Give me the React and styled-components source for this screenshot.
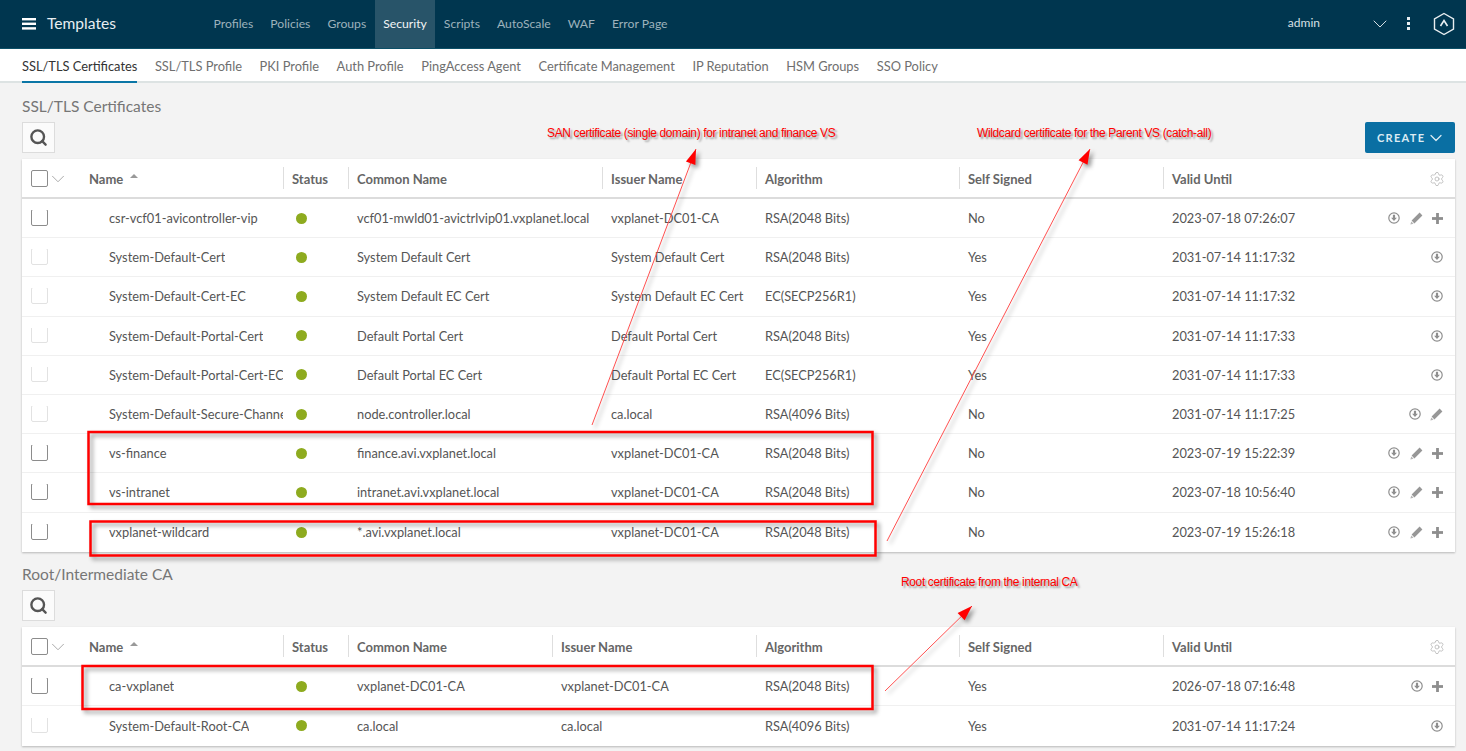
import React from 'react';
import styled, { createGlobalStyle } from 'styled-components';
import { Search, ChevronDown, Settings } from 'lucide-react';

const GlobalStyle = createGlobalStyle`
  html, body {
    margin: 0;
    background: #f3f3f3;
    font-family: 'Lato', 'Liberation Sans', sans-serif;
    overflow: hidden;
  }
  * { box-sizing: border-box; }
`;

const Page = styled.div`
  position: relative;
  width: 1466px;
  height: 751px;
  overflow: hidden;
  background: #f3f3f3;
`;

const TopBar = styled.header`
  display: flex;
  align-items: stretch;
  height: 49px;
  background: #00364f;
  border-bottom: 1px solid #0c5068;
  color: #fff;
`;

const Brand = styled.div`
  display: flex;
  align-items: center;
  gap: 11px;
  width: 205px;
  padding-left: 22px;
  font-size: 15.6px;
  color: #e8eef1;
`;

const BrandName = styled.span`
  margin-top: -3px;
`;

const MainNav = styled.nav`
  display: flex;
`;

const MainNavItem = styled.a`
  display: flex;
  align-items: center;
  padding: 0 8.5px 2px;
  font-size: 12.2px;
  color: ${p => (p.$active ? '#f2f5f6' : '#9db2bc')};
  background: ${p => (p.$active ? '#285469' : 'transparent')};
`;

const UserArea = styled.div`
  display: flex;
  align-items: center;
  margin-left: auto;
  padding-right: 11px;
  color: #d6e0e5;
  font-size: 12px;
`;

const UserName = styled.span`
  margin: 0 48px 3px 0;
`;

const DotsIcon = styled.span`
  display: flex;
  flex-direction: column;
  gap: 2px;
  margin: -2px 23.5px 0 14.5px;
  i {
    width: 3px;
    height: 3px;
    background: #e8eef1;
  }
`;

const SubNav = styled.nav`
  display: flex;
  gap: 17.6px;
  height: 34px;
  padding-left: 22px;
  background: #fff;
  border-bottom: 2px solid #dde3e3;
`;

const SubNavItem = styled.a`
  height: 34px;
  padding-top: 9px;
  font-size: 12.85px;
  white-space: nowrap;
  color: ${p => (p.$active ? '#333' : '#6f6f6f')};
  border-bottom: 2px solid ${p => (p.$active ? '#0a76a6' : 'transparent')};
`;

const Section = styled.section`
  padding: 0 11px 0 22px;
`;

const SectionTitle = styled.h2`
  margin: ${p => p.$top}px 0 0;
  height: 20px;
  font-size: 15.5px;
  line-height: 20px;
  font-weight: 400;
  color: #767676;
`;

const Toolbar = styled.div`
  display: flex;
  justify-content: space-between;
  align-items: flex-start;
  height: 31px;
  margin-top: 6px;
`;

const SearchButton = styled.button`
  display: flex;
  align-items: center;
  justify-content: center;
  width: 33px;
  height: 31px;
  padding: 0;
  background: #fbfbfb;
  border: 1px solid #dcdcdc;
  color: #555;
`;

const CreateButton = styled.button`
  display: flex;
  align-items: center;
  gap: 1px;
  width: 90px;
  height: 31px;
  padding: 0 0 0 12px;
  background: #0a6fa3;
  border: 0;
  border-radius: 2px;
  color: #dcebf3;
  font-family: inherit;
  font-size: 11px;
  font-weight: 700;
  letter-spacing: 1.3px;
`;

const Card = styled.div`
  margin-top: 6px;
  background: #fff;
  box-shadow: 0 1px 2px rgba(0, 0, 0, 0.25);
`;

const HeaderRow = styled.div`
  display: grid;
  grid-template-columns: ${p => p.$columns};
  align-items: center;
  height: 40px;
  border-bottom: 2px solid #dcdcdc;
`;

const HeaderCell = styled.div`
  display: flex;
  align-items: center;
  height: 22px;
  padding: 1px 0 0 8px;
  font-size: 13px;
  font-weight: 700;
  color: #666;
  border-left: 1px solid #dedede;
`;

const NameHeaderCell = styled(HeaderCell)`
  padding-left: 9px;
  border-left: 0;
`;

const SortCaret = styled.span`
  margin: -6px 0 0 7px;
  width: 0;
  height: 0;
  border-left: 4.5px solid transparent;
  border-right: 4.5px solid transparent;
  border-bottom: 4.5px solid #999;
`;

const GearCell = styled(HeaderCell)`
  justify-content: space-between;
  padding-right: 10px;
`;

const Row = styled.div`
  display: grid;
  grid-template-columns: ${p => p.$columns};
  align-items: center;
  height: 39.2px;
  border-bottom: 1px solid #f0f0f0;
  font-size: 12.8px;
  color: #555;
  &:last-child { border-bottom: 0; }
`;

const Cell = styled.div`
  padding-left: 9px;
  white-space: nowrap;
  overflow: hidden;
`;

const NameCell = styled(Cell)`
  display: flex;
  align-items: center;
`;

const NameText = styled.span`
  margin-left: 61px;
  overflow: hidden;
`;

const CheckBox = styled.span`
  flex: none;
  width: 17px;
  height: 17px;
  margin-top: -2px;
  background: #fff;
  border: 1.5px solid ${p => (p.$disabled ? '#e2e2e2' : '#8c8c8c')};
  border-radius: 2px;
`;

const HeaderCheck = styled(CheckBox)`
  margin-right: -1px;
  margin-top: 0;
`;

const HeaderLabel = styled.span`
  margin-left: 20px;
`;

const Dot = styled.span`
  display: block;
  width: 11px;
  height: 11px;
  margin-left: 4px;
  border-radius: 50%;
  background: #8eab1f;
`;

const ActionsCell = styled(Cell)`
  display: flex;
  align-items: center;
`;

const ValidText = styled.span`
  margin-right: auto;
`;

const Actions = styled.span`
  display: flex;
  align-items: center;
  gap: 9.5px;
  padding-right: 12px;
`;

const Annotation = styled.div`
  position: absolute;
  left: ${p => p.$x}px;
  top: ${p => p.$y}px;
  font-family: 'Liberation Sans', Arial, sans-serif;
  font-size: 12px;
  line-height: 14px;
  letter-spacing: -0.37px;
  color: #ff0000;
  white-space: nowrap;
  text-shadow: 2px 2px 2px rgba(0, 0, 0, 0.4);
`;

const Markup = styled.svg`
  position: absolute;
  top: 0;
  left: 0;
  pointer-events: none;
  filter: drop-shadow(3px 3px 2px rgba(0, 0, 0, 0.4));
`;

const MenuIcon = () => (
  <svg width="14" height="12" viewBox="0 0 14 12" fill="#fff">
    <rect y="0" width="14" height="2.4" />
    <rect y="4.6" width="14" height="2.4" />
    <rect y="9.2" width="14" height="2.4" />
  </svg>
);

const LogoIcon = () => (
  <svg width="22" height="24" viewBox="0 0 22 24" fill="none" stroke="#e8eef1" strokeWidth="1.4">
    <path d="M11 1.5 20.5 7v10L11 22.5 1.5 17V7z" />
    <path d="M7.5 14 11 8.5 14.5 14" strokeWidth="1.6" />
  </svg>
);

const DownloadIcon = () => (
  <svg width="12" height="12" viewBox="0 0 12 12">
    <circle cx="6" cy="6" r="5.2" fill="none" stroke="#8e8e8e" strokeWidth="1.2" />
    <path d="M4.9 2.8h2.2v3h1.8L6 9 3.1 5.8h1.8z" fill="#8e8e8e" />
  </svg>
);

const PencilIcon = () => (
  <svg width="13" height="13" viewBox="0 0 13 13">
    <path d="M9.6.6 12.4 3.4 4.4 11.4 1.6 8.6z" fill="#979797" />
    <path d="M1.2 9.4 3.6 11.8.4 12.6z" fill="#b5b5b5" />
  </svg>
);

const PlusIcon = () => (
  <svg width="11" height="11" viewBox="0 0 11 11" fill="#8e8e8e">
    <rect x="4.1" width="2.8" height="11" />
    <rect y="4.1" width="11" height="2.8" />
  </svg>
);

const ACTION_ICONS = { d: DownloadIcon, e: PencilIcon, p: PlusIcon };

const Arrow = ({ x1, y1, x2, y2 }) => {
  const angle = Math.atan2(y2 - y1, x2 - x1);
  const len = 16;
  const spread = 0.32;
  const a = [x2 - len * Math.cos(angle - spread), y2 - len * Math.sin(angle - spread)];
  const b = [x2 - len * Math.cos(angle + spread), y2 - len * Math.sin(angle + spread)];
  return (
    <g>
      <line x1={x1} y1={y1} x2={x2} y2={y2} stroke="#ff5050" strokeWidth="1" />
      <polygon points={`${x2},${y2} ${a[0]},${a[1]} ${b[0]},${b[1]}`} fill="#ff0000" />
    </g>
  );
};

const COLS_CERTS = '261px 65px 254px 154px 203px 204px 292px';
const COLS_CA = '261px 65px 204px 204px 203px 204px 292px';

const certRows = [
  ['csr-vcf01-avicontroller-vip', 'vcf01-mwld01-avictrlvip01.vxplanet.local', 'vxplanet-DC01-CA', 'RSA(2048 Bits)', 'No', '2023-07-18 07:26:07', 'dep', false],
  ['System-Default-Cert', 'System Default Cert', 'System Default Cert', 'RSA(2048 Bits)', 'Yes', '2031-07-14 11:17:32', 'd', true],
  ['System-Default-Cert-EC', 'System Default EC Cert', 'System Default EC Cert', 'EC(SECP256R1)', 'Yes', '2031-07-14 11:17:32', 'd', true],
  ['System-Default-Portal-Cert', 'Default Portal Cert', 'Default Portal Cert', 'RSA(2048 Bits)', 'Yes', '2031-07-14 11:17:33', 'd', true],
  ['System-Default-Portal-Cert-EC256', 'Default Portal EC Cert', 'Default Portal EC Cert', 'EC(SECP256R1)', 'Yes', '2031-07-14 11:17:33', 'd', true],
  ['System-Default-Secure-Channel-Cert', 'node.controller.local', 'ca.local', 'RSA(4096 Bits)', 'No', '2031-07-14 11:17:25', 'de', true],
  ['vs-finance', 'finance.avi.vxplanet.local', 'vxplanet-DC01-CA', 'RSA(2048 Bits)', 'No', '2023-07-19 15:22:39', 'dep', false],
  ['vs-intranet', 'intranet.avi.vxplanet.local', 'vxplanet-DC01-CA', 'RSA(2048 Bits)', 'No', '2023-07-18 10:56:40', 'dep', false],
  ['vxplanet-wildcard', '*.avi.vxplanet.local', 'vxplanet-DC01-CA', 'RSA(2048 Bits)', 'No', '2023-07-19 15:26:18', 'dep', false],
];

const caRows = [
  ['ca-vxplanet', 'vxplanet-DC01-CA', 'vxplanet-DC01-CA', 'RSA(2048 Bits)', 'Yes', '2026-07-18 07:16:48', 'dp', false],
  ['System-Default-Root-CA', 'ca.local', 'ca.local', 'RSA(4096 Bits)', 'Yes', '2031-07-14 11:17:24', 'd', true],
];

const CertTable = ({ columns, rows }) => (
  <Card>
    <HeaderRow $columns={columns}>
      <NameHeaderCell>
        <HeaderCheck />
        <ChevronDown size={22} color="#999" strokeWidth={0.9} />
        <HeaderLabel>Name</HeaderLabel>
        <SortCaret />
      </NameHeaderCell>
      <HeaderCell>Status</HeaderCell>
      <HeaderCell>Common Name</HeaderCell>
      <HeaderCell>Issuer Name</HeaderCell>
      <HeaderCell>Algorithm</HeaderCell>
      <HeaderCell>Self Signed</HeaderCell>
      <GearCell>
        Valid Until
        <Settings size={16} color="#b5b5b5" strokeWidth={1.2} />
      </GearCell>
    </HeaderRow>
    {rows.map(([name, common, issuer, algorithm, self, valid, actions, locked]) => (
      <Row key={name} $columns={columns}>
        <NameCell>
          <CheckBox $disabled={locked} />
          <NameText>{name}</NameText>
        </NameCell>
        <Cell><Dot /></Cell>
        <Cell>{common}</Cell>
        <Cell>{issuer}</Cell>
        <Cell>{algorithm}</Cell>
        <Cell>{self}</Cell>
        <ActionsCell>
          <ValidText>{valid}</ValidText>
          <Actions>
            {actions.split('').map(key => {
              const Icon = ACTION_ICONS[key];
              return <Icon key={key} />;
            })}
          </Actions>
        </ActionsCell>
      </Row>
    ))}
  </Card>
);

const App = () => (
  <Page>
    <GlobalStyle />
    <TopBar>
      <Brand>
        <MenuIcon />
        <BrandName>Templates</BrandName>
      </Brand>
      <MainNav>
        {['Profiles', 'Policies', 'Groups', 'Security', 'Scripts', 'AutoScale', 'WAF', 'Error Page'].map(item => (
          <MainNavItem key={item} $active={item === 'Security'}>{item}</MainNavItem>
        ))}
      </MainNav>
      <UserArea>
        <UserName>admin</UserName>
        <ChevronDown size={24} color="#d6e0e5" strokeWidth={1} />
        <DotsIcon><i /><i /><i /></DotsIcon>
        <LogoIcon />
      </UserArea>
    </TopBar>
    <SubNav>
      {['SSL/TLS Certificates', 'SSL/TLS Profile', 'PKI Profile', 'Auth Profile', 'PingAccess Agent', 'Certificate Management', 'IP Reputation', 'HSM Groups', 'SSO Policy'].map((item, i) => (
        <SubNavItem key={item} $active={i === 0}>{item}</SubNavItem>
      ))}
    </SubNav>
    <Section>
      <SectionTitle $top={13}>SSL/TLS Certificates</SectionTitle>
      <Toolbar>
        <SearchButton><Search size={19} strokeWidth={3} /></SearchButton>
        <CreateButton>
          CREATE
          <ChevronDown size={20} strokeWidth={1.5} />
        </CreateButton>
      </Toolbar>
      <CertTable columns={COLS_CERTS} rows={certRows} />
      <SectionTitle $top={12.5}>Root/Intermediate CA</SectionTitle>
      <Toolbar>
        <SearchButton><Search size={19} strokeWidth={3} /></SearchButton>
      </Toolbar>
      <CertTable columns={COLS_CA} rows={caRows} />
    </Section>

    <Annotation $x={547} $y={126}>SAN certificate (single domain) for intranet and finance VS</Annotation>
    <Annotation $x={977} $y={126}>Wildcard certificate for the Parent VS (catch-all)</Annotation>
    <Annotation $x={901} $y={575}>Root certificate from the internal CA</Annotation>
    <Markup width="1466" height="751" viewBox="0 0 1466 751" fill="none">
      <rect x="88.5" y="432" width="784" height="72" stroke="#ff0000" strokeWidth="2.5" />
      <rect x="90.5" y="521.5" width="785" height="34" stroke="#ff0000" strokeWidth="2.5" />
      <rect x="82.5" y="666" width="790" height="43" stroke="#ff0000" strokeWidth="2.5" />
      <Arrow x1={592} y1={425} x2={696} y2={149} />
      <Arrow x1={887} y1={541} x2={1090} y2={149} />
      <Arrow x1={885} y1={691} x2={972} y2={606} />
    </Markup>
  </Page>
);

export default App;
